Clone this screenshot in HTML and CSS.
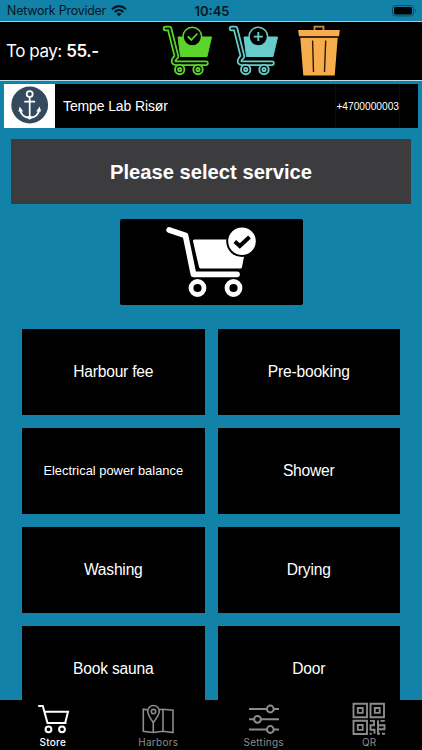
FILE: index.html
```
<!DOCTYPE html>
<html lang="en">
<head>
  <meta charset="UTF-8" />
  <meta name="viewport" content="width=device-width, initial-scale=1" />
  <title>Store</title>
  <link rel="stylesheet" href="styles.css">
</head>
<body>

  <!-- shared cart shape for the top bar buttons -->
  <svg class="defs" width="0" height="0">
    <symbol id="cart" viewBox="0 0 52 54">
      <path d="M16 13 H49.5 L45 32.5 H18.5 Z" fill="currentColor" stroke="currentColor" stroke-linejoin="round" />
      <path d="M3.5 4.5 H7.5 L14.5 32.5 Q8.5 38.5 14.5 39.3 H44" fill="none" stroke="currentColor" stroke-width="5.4" stroke-linecap="round" stroke-linejoin="round" />
      <path d="M3.5 4.5 H7.5 L14.5 32.5 Q8.5 38.5 14.5 39.3 H44" fill="none" stroke="#001004" stroke-width="1.9" stroke-linecap="round" stroke-linejoin="round" />
      <circle cx="30.3" cy="12.6" r="9.3" fill="#000" stroke="currentColor" stroke-width="1.5" />
      <g stroke="currentColor" stroke-width="1.9" fill="#000">
        <circle cx="17.7" cy="45.6" r="4.7" />
        <circle cx="36" cy="45.6" r="4.7" />
        <circle cx="17.7" cy="45.6" r="1.6" />
        <circle cx="36" cy="45.6" r="1.6" />
      </g>
    </symbol>
  </svg>

  <div class="status-bar">
    <div class="provider">
      <span>Network Provider</span>
      <svg width="16" height="12" viewBox="0 0 16 12">
        <g fill="none" stroke="#06171f" stroke-width="2.1">
          <path d="M1 4.2 Q8 -2 15 4.2" />
          <path d="M3.6 7 Q8 3 12.4 7" />
        </g>
        <path d="M5.5 8.7 Q8 6.7 10.5 8.7 L8 11.2 Z" fill="#06171f" />
      </svg>
    </div>
    <div class="clock">10:45</div>
    <svg class="battery" width="25" height="12" viewBox="0 0 25 12">
      <rect x=".5" y=".5" width="21" height="10.4" rx="3" fill="none" stroke="#0a4a62" />
      <rect x="2" y="2" width="18" height="7.4" rx="1.7" fill="#000" />
      <path d="M23 4 Q25 5.7 23 7.4 Z" fill="#0a4a62" />
    </svg>
  </div>

  <div class="top-bar">
    <div class="total">To pay: <b>55.-</b></div>
    <svg class="cart green" width="52" height="54">
      <use href="#cart" />
      <path d="M25.8 12.5 L29.3 16 L35.3 9.5" fill="none" stroke="currentColor" stroke-width="1.8" />
    </svg>
    <svg class="cart teal" width="52" height="54">
      <use href="#cart" />
      <path d="M25.8 12.6 H34.8 M30.3 8.1 V17.1" fill="none" stroke="currentColor" stroke-width="1.8" />
    </svg>
    <svg class="trash" width="44" height="54" viewBox="0 0 44 54">
      <path d="M17.5 6 V2.7 H26.5 V6" fill="none" stroke="#c98a40" stroke-width="1.8" />
      <path d="M1.2 6 H42.8 L42 12.3 H2 Z" fill="#f7ad4c" />
      <path d="M3.3 13.7 H40.7 L37.7 51.5 H6.3 Z" fill="#f7ad4c" />
      <path d="M15.6 16.5 L16.5 48 M28.7 16.5 L27.5 48" stroke="#2b1c08" stroke-width="1.4" />
    </svg>
  </div>

  <div class="account">
    <div class="logo">
      <svg width="38" height="38" viewBox="0 0 38 38">
        <circle cx="18.7" cy="19" r="18.4" fill="#34495e" />
        <g fill="none" stroke="#fff" stroke-width="1.7" stroke-linecap="round">
          <circle cx="18.7" cy="8.1" r="3" />
          <path d="M18.7 11.2 V31 M14 15.7 H23.4" />
          <path d="M9 23.5 Q10.2 31 18.7 32 Q27.2 31 28.4 23.5" />
        </g>
        <path d="M8.7 20.5 L12.2 25.5 L7.4 25.5 Z M28.7 20.5 L25.2 25.5 L30 25.5 Z M15.2 31 L18.7 33.7 L22.2 31 L18.7 29.5 Z" fill="#fff" />
      </svg>
    </div>
    <div class="name">Tempe Lab Risør</div>
    <div class="phone">+4700000003</div>
  </div>

  <h1>Please select service</h1>

  <button class="checkout" aria-label="Checkout">
    <svg width="92" height="72" viewBox="0 0 92 72">
      <g fill="none" stroke="#fff" stroke-linecap="round" stroke-linejoin="round">
        <path d="M3.2 4 L19.5 9.5 L27.5 48.3 H71" stroke-width="5.8" />
        <circle cx="31.5" cy="62" r="6.5" stroke-width="4.8" />
        <circle cx="67.5" cy="62" r="6.5" stroke-width="4.8" />
      </g>
      <path d="M28.5 15 H79.5 L74.5 41 H34.5 Z" fill="#fff" stroke="#fff" stroke-width="3" stroke-linejoin="round" />
      <circle cx="76" cy="15.3" r="15.8" fill="#000" />
      <circle cx="76" cy="15.3" r="13.8" fill="#fff" />
      <path d="M68.8 15.5 L73.8 20 L83.5 11" fill="none" stroke="#000" stroke-width="4" />
    </svg>
  </button>

  <div class="services">
    <button>Harbour fee</button>
    <button>Pre-booking</button>
    <button class="small">Electrical power balance</button>
    <button>Shower</button>
    <button>Washing</button>
    <button>Drying</button>
    <button>Book sauna</button>
    <button>Door</button>
  </div>

  <nav class="tabs">
    <a class="active">
      <svg width="34" height="35" viewBox="0 0 34 35" fill="none" stroke="currentColor" stroke-width="2">
        <path d="M2.2 6 H6.8 L11.5 23 H30.5 M8.5 11.7 H32 L29.3 22.5" />
        <circle cx="12.5" cy="29.3" r="2.9" />
        <circle cx="26" cy="29.3" r="2.9" />
      </svg>
      <span>Store</span>
    </a>
    <a>
      <svg width="34" height="35" viewBox="0 0 34 35" fill="none" stroke="currentColor" stroke-width="1.6">
        <path d="M11.7 10.5 L2.3 9.2 V31.3 L12.3 32.5 L22 31.3 L32 32.5 V10.3 L22 9.2 L18 9.8 M12.3 22 V32.5 M22 9.2 V31" />
        <path d="M12.3 22.5 Q6.7 15 6.7 11.3 A5.8 5.8 0 0 1 18.3 11.3 Q18.3 15 12.3 22.5 Z" fill="#000" />
        <circle cx="12.5" cy="11.6" r="2.2" />
      </svg>
      <span>Harbors</span>
    </a>
    <a>
      <svg width="34" height="35" viewBox="0 0 34 35" fill="none" stroke="currentColor" stroke-width="2">
        <path d="M2 9 H32 M2 19.3 H32 M2 29.5 H32" />
        <circle cx="23.3" cy="9" r="3.4" fill="#000" />
        <circle cx="10.5" cy="19.3" r="3.4" fill="#000" />
        <circle cx="23.3" cy="29.5" r="3.4" fill="#000" />
      </svg>
      <span>Settings</span>
    </a>
    <a>
      <svg width="34" height="35" viewBox="0 0 34 35" fill="none" stroke="currentColor" stroke-width="1.9">
        <path d="M1.5 3.7 H15 V17.2 H1.5 Z M18.5 3.7 H32 V17.2 H18.5 Z M1.5 20.7 H15 V34 H1.5 Z" />
        <path d="M5.8 8 H10.7 V12.9 H5.8 Z M22.8 8 H27.7 V12.9 H22.8 Z M5.8 25 H10.7 V29.9 H5.8 Z" />
        <path d="M18 20.9 H22 V25.2 H18.5 V29.7 H22.5 V33.8 M26 20.2 V29.2 H32.5 V25.2 H26 M28.5 20.9 H32.8 M17.7 33.8 H19.7 M26 29.2 V33.8 H28 M30 33.8 H33" />
      </svg>
      <span>QR</span>
    </a>
  </nav>

</body>
</html>
```
FILE: styles.css
```
* {
  box-sizing: border-box;
}

body {
  margin: 0;
  height: 750px;
  overflow: hidden;
  background-color: #1282a8;
  font-family: "Liberation Sans", Arial, sans-serif;
  color: #fff;
  display: flex;
  flex-direction: column;
}

svg {
  display: block;
  flex: none;
}

.defs {
  position: absolute;
}

button {
  border: none;
  padding: 0;
  background: #000;
  color: #fff;
  font-family: inherit;
}

.status-bar {
  flex: none;
  height: 21px;
  padding: 0 5px 0 7px;
  display: grid;
  grid-template-columns: 1fr auto 1fr;
  align-items: center;
  font-family: Inter, sans-serif;
  font-size: 13px;
  color: #06171f;
}

.provider {
  display: flex;
  align-items: center;
  gap: 5px;
  font-size: 12.4px;
  letter-spacing: -0.2px;
}

.clock {
  font-weight: 600;
}

.battery {
  justify-self: end;
}

.top-bar {
  flex: none;
  height: 60px;
  border-top: 1px solid #9fcbdb;
  border-bottom: 1px solid #b9dbe6;
  background: #000;
  display: flex;
  align-items: flex-start;
  padding: 2px 0 0 6px;
}

.total {
  width: 156px;
  line-height: 54px;
  font-family: Inter, sans-serif;
  font-size: 17px;
  letter-spacing: -0.45px;
}

.total b {
  font-weight: 600;
}

.cart {
  margin-right: 14px;
}

.green {
  color: #5bd52c;
}

.teal {
  color: #68cdca;
}

.trash {
  margin-left: 3px;
}

.account {
  flex: none;
  height: 44px;
  margin: 3px 4px 0;
  background: #000;
  display: flex;
  align-items: center;
}

.logo {
  width: 51px;
  height: 44px;
  padding: 2px 0 0 7px;
  background: #fff;
}

.name {
  flex: 1;
  padding-left: 8px;
  font-size: 14px;
  letter-spacing: -0.12px;
}

.phone {
  height: 44px;
  line-height: 45px;
  margin-right: 18px;
  border-left: 1px solid #0b0b0b;
  border-right: 1px solid #0b0b0b;
  font-size: 10.2px;
}

h1 {
  flex: none;
  height: 65px;
  margin: 11px 11px 0;
  line-height: 66px;
  text-align: center;
  font-size: 20.2px;
  background: #3c3c3e;
}

.checkout {
  flex: none;
  align-self: center;
  width: 183px;
  height: 86px;
  margin: 15px 0 0;
  padding: 0 0 0 46px;
  border-radius: 2px;
}

.services {
  flex: none;
  margin: 24px 22px 0;
  display: grid;
  grid-template-columns: 1fr 1fr;
  grid-auto-rows: 86px;
  gap: 13px;
}

.services button {
  padding-bottom: 1px;
  font-size: 15.6px;
  letter-spacing: -0.2px;
}

.services .small {
  font-size: 12.9px;
  letter-spacing: 0;
}

.tabs {
  position: fixed;
  left: 0;
  right: 0;
  bottom: 0;
  height: 50px;
  background: #000;
  display: grid;
  grid-template-columns: repeat(4, 1fr);
}

.tabs a {
  display: flex;
  flex-direction: column;
  align-items: center;
  color: #8c8c8c;
  font-family: Inter, sans-serif;
  font-size: 10px;
  line-height: 14px;
  letter-spacing: 0.25px;
}

.tabs .active {
  color: #fff;
  font-weight: 500;
}
```
